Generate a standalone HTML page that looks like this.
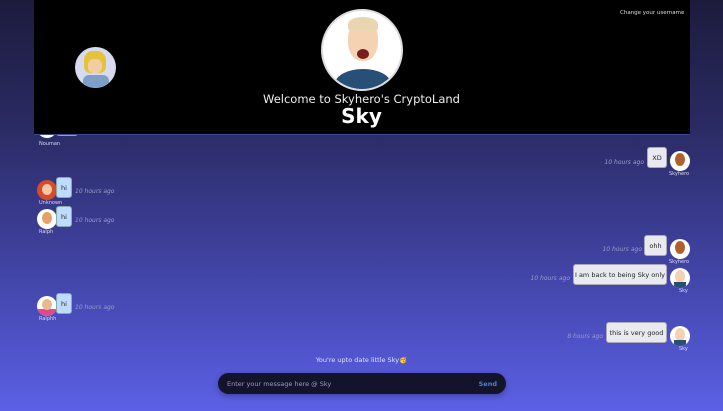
<!DOCTYPE html>
<html><head><meta charset="utf-8"><style>
*{margin:0;padding:0;box-sizing:border-box}
body{width:723px;height:411px;overflow:hidden;position:relative;font-family:"DejaVu Sans","Liberation Sans",sans-serif;background:linear-gradient(#1c1b3c 0%,#2a2a62 30%,#4447ad 70%,#5c60e6 100%)}
.hdr{position:absolute;left:34px;top:0;width:656px;height:135px;background:#000;border-bottom:1px solid #3a4a9a;z-index:2}
.abs{position:absolute}
.av{position:absolute;width:20px;height:20px;border-radius:50%;background:#fff;overflow:hidden}
.nm{position:absolute;font-size:5px;color:#d8dbf5}
.b{position:absolute;background:#e8eaf0;border:1px solid #aab;border-radius:3px;font-size:6.5px;color:#222;padding:0 6px;display:flex;align-items:center;justify-content:center;white-space:nowrap;height:21px}
.bl{background:#bfdcff;border-color:#8aa;width:16px;padding:0}
.t{position:absolute;font-size:6px;font-style:italic;color:#9a9cc8;white-space:nowrap}
</style></head><body>
<div class="hdr"></div>
<div class="abs" style="left:620px;top:10px;font-size:5.5px;color:#ddd;z-index:3">Change your username</div>
<div class="abs" style="left:75px;top:47px;width:41px;height:41px;border-radius:50%;background:#d6dbee;overflow:hidden;z-index:3">
<div class="abs" style="left:9px;top:4px;width:22px;height:22px;border-radius:40% 40% 30% 30%;background:#e4c23a"></div>
<div class="abs" style="left:13px;top:12px;width:14px;height:14px;border-radius:40%;background:#f1cda4"></div>
<div class="abs" style="left:8px;top:28px;width:26px;height:14px;background:#7ea0c8;border-radius:6px 6px 0 0"></div>
</div>
<div class="abs" style="left:321px;top:9px;width:82px;height:82px;border-radius:50%;background:#fff;border:2px solid #ddd;overflow:hidden;z-index:3">
<div class="abs" style="left:25px;top:8px;width:30px;height:42px;border-radius:45%;background:#f5d3b2"></div>
<div class="abs" style="left:25px;top:6px;width:30px;height:14px;border-radius:50% 50% 20% 20%;background:#e8d6b0"></div>
<div class="abs" style="left:34px;top:38px;width:12px;height:10px;border-radius:50%;background:#7a1d1d"></div>
<div class="abs" style="left:12px;top:58px;width:56px;height:30px;border-radius:50% 50% 0 0;background:#285077"></div>
</div>
<div class="abs" style="left:0;width:723px;top:92px;text-align:center;font-size:11.5px;color:#eee;z-index:3">Welcome to Skyhero's CryptoLand</div>
<div class="abs" style="left:0;width:723px;top:104px;text-align:center;font-size:20px;font-weight:bold;color:#fff;z-index:3">Sky</div>

<div class="av" style="left:37px;top:118px"></div>
<div class="b bl" style="left:56px;top:115px;width:22px"></div>
<div class="nm" style="left:39px;top:141px">Nouman</div>

<div class="av" style="left:37px;top:180px;background:#d84a2a"><div class="abs" style="left:5px;top:4px;width:10px;height:11px;border-radius:50%;background:#f3c9a4"></div></div>
<div class="b bl" style="left:56px;top:177px">hi</div>
<div class="t" style="left:75px;top:188px">10 hours ago</div>
<div class="nm" style="left:39px;top:200px">Unknown</div>

<div class="av" style="left:37px;top:209px"><div class="abs" style="left:5px;top:3px;width:10px;height:12px;border-radius:50%;background:#e8a066"></div></div>
<div class="b bl" style="left:56px;top:206px">hi</div>
<div class="t" style="left:75px;top:217px">10 hours ago</div>
<div class="nm" style="left:39px;top:229px">Ralph</div>

<div class="av" style="left:37px;top:296px"><div class="abs" style="left:0;top:13px;width:20px;height:8px;background:#e04a8a"></div><div class="abs" style="left:5px;top:3px;width:10px;height:11px;border-radius:50%;background:#e7b98e"></div></div>
<div class="b bl" style="left:56px;top:293px">hi</div>
<div class="t" style="left:75px;top:304px">10 hours ago</div>
<div class="nm" style="left:39px;top:316px">Ralphh</div>

<div class="t" style="right:79px;top:159px">10 hours ago</div>
<div class="b" style="right:56px;top:147px;width:20px">XD</div>
<div class="av" style="left:670px;top:151px"><div class="abs" style="left:5px;top:2px;width:10px;height:13px;border-radius:50%;background:#b0602a"></div></div>
<div class="nm" style="left:669px;top:171px">Skyhero</div>

<div class="t" style="right:81px;top:246px">10 hours ago</div>
<div class="b" style="right:56px;top:235px;width:23px">ohh</div>
<div class="av" style="left:670px;top:239px"><div class="abs" style="left:5px;top:2px;width:10px;height:13px;border-radius:50%;background:#b0602a"></div></div>
<div class="nm" style="left:669px;top:259px">Skyhero</div>

<div class="t" style="right:153px;top:275px">10 hours ago</div>
<div class="b" style="right:56px;top:264px;width:94px;padding:0">I am back to being Sky only</div>
<div class="av" style="left:670px;top:268px"><div class="abs" style="left:5px;top:2px;width:10px;height:13px;border-radius:50%;background:#f3d2b3"></div><div class="abs" style="left:4px;top:14px;width:12px;height:6px;background:#285077"></div></div>
<div class="nm" style="left:679px;top:288px">Sky</div>

<div class="t" style="right:120px;top:333px">8 hours ago</div>
<div class="b" style="right:56px;top:322px;width:61px;padding:0">this is very good</div>
<div class="av" style="left:670px;top:326px"><div class="abs" style="left:5px;top:2px;width:10px;height:13px;border-radius:50%;background:#f3d2b3"></div><div class="abs" style="left:4px;top:14px;width:12px;height:6px;background:#285077"></div></div>
<div class="nm" style="left:679px;top:346px">Sky</div>

<div class="abs" style="left:0;width:723px;top:356px;text-align:center;font-size:6.5px;color:#e0e2ff">You're upto date little Sky🥳</div>
<div class="abs" style="left:218px;top:373px;width:288px;height:21px;border-radius:11px;background:#13142c;box-shadow:0 2px 6px rgba(0,0,0,.3)">
<div class="abs" style="left:9px;top:7px;font-size:6.5px;color:#9a9cb8">Enter your message here @ Sky</div>
<div class="abs" style="right:9px;top:6.5px;font-size:6.5px;font-weight:bold;color:#4b7fe0">Send</div>
</div>
</body></html>
